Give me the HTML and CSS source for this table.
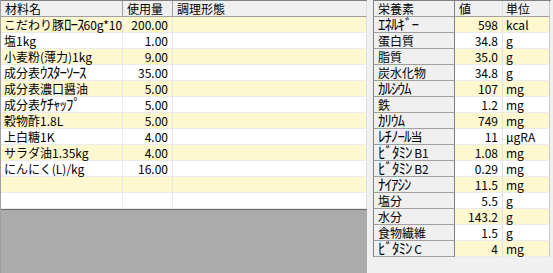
FILE: index.html
```html
<!DOCTYPE html>
<html lang="ja">
<head>
<meta charset="utf-8">
<link rel="stylesheet" href="styles.css">
</head>
<body>
<div class="app">
  <div class="left">
    <div class="lgrid">
      <div class="row head"><div class="c c1">材料名</div><div class="c c2">使用量</div><div class="c c3">調理形態</div></div>
      <div class="row y"><div class="c c1">こだわり豚<span class="hw">ﾛｰｽ</span>60g*10</div><div class="c c2 num">200.00</div><div class="c c3"></div></div>
      <div class="row"><div class="c c1">塩1kg</div><div class="c c2 num">1.00</div><div class="c c3"></div></div>
      <div class="row y"><div class="c c1">小麦粉(薄力)1kg</div><div class="c c2 num">9.00</div><div class="c c3"></div></div>
      <div class="row"><div class="c c1">成分表<span class="hw">ｳｽﾀｰｿｰｽ</span></div><div class="c c2 num">35.00</div><div class="c c3"></div></div>
      <div class="row y"><div class="c c1">成分表濃口醤油</div><div class="c c2 num">5.00</div><div class="c c3"></div></div>
      <div class="row"><div class="c c1">成分表<span class="hw">ｹﾁｬｯﾌﾟ</span></div><div class="c c2 num">5.00</div><div class="c c3"></div></div>
      <div class="row y"><div class="c c1">穀物酢1.8L</div><div class="c c2 num">5.00</div><div class="c c3"></div></div>
      <div class="row"><div class="c c1">上白糖1K</div><div class="c c2 num">4.00</div><div class="c c3"></div></div>
      <div class="row y"><div class="c c1">サラダ油1.35kg</div><div class="c c2 num">4.00</div><div class="c c3"></div></div>
      <div class="row"><div class="c c1">にんにく(L)/kg</div><div class="c c2 num">16.00</div><div class="c c3"></div></div>
      <div class="row y"><div class="c c1"></div><div class="c c2"></div><div class="c c3"></div></div>
      <div class="row"><div class="c c1"></div><div class="c c2"></div><div class="c c3"></div></div>
    </div>
    <div class="filler"></div>
  </div>
  <div class="right">
    <div class="rrow head"><div class="c n1">栄養素</div><div class="c n2">値</div><div class="c n3">単位</div></div>
    <div class="rrow y"><div class="c n1 lab"><span class="hw">ｴﾈﾙｷﾞｰ</span></div><div class="c n2 num">598</div><div class="c n3">kcal</div></div>
    <div class="rrow"><div class="c n1 lab">蛋白質</div><div class="c n2 num">34.8</div><div class="c n3">g</div></div>
    <div class="rrow y"><div class="c n1 lab">脂質</div><div class="c n2 num">35.0</div><div class="c n3">g</div></div>
    <div class="rrow"><div class="c n1 lab">炭水化物</div><div class="c n2 num">34.8</div><div class="c n3">g</div></div>
    <div class="rrow y"><div class="c n1 lab"><span class="hw">ｶﾙｼｳﾑ</span></div><div class="c n2 num">107</div><div class="c n3">mg</div></div>
    <div class="rrow"><div class="c n1 lab">鉄</div><div class="c n2 num">1.2</div><div class="c n3">mg</div></div>
    <div class="rrow y"><div class="c n1 lab"><span class="hw">ｶﾘｳﾑ</span></div><div class="c n2 num">749</div><div class="c n3">mg</div></div>
    <div class="rrow"><div class="c n1 lab"><span class="hw">ﾚﾁﾉｰﾙ</span>当</div><div class="c n2 num">11</div><div class="c n3">μgRA</div></div>
    <div class="rrow y"><div class="c n1 lab"><span class="hw">ﾋﾞﾀﾐﾝ</span> B1</div><div class="c n2 num">1.08</div><div class="c n3">mg</div></div>
    <div class="rrow"><div class="c n1 lab"><span class="hw">ﾋﾞﾀﾐﾝ</span> B2</div><div class="c n2 num">0.29</div><div class="c n3">mg</div></div>
    <div class="rrow y"><div class="c n1 lab"><span class="hw">ﾅｲｱｼﾝ</span></div><div class="c n2 num">11.5</div><div class="c n3">mg</div></div>
    <div class="rrow"><div class="c n1 lab">塩分</div><div class="c n2 num">5.5</div><div class="c n3">g</div></div>
    <div class="rrow y"><div class="c n1 lab">水分</div><div class="c n2 num">143.2</div><div class="c n3">g</div></div>
    <div class="rrow"><div class="c n1 lab">食物繊維</div><div class="c n2 num">1.5</div><div class="c n3">g</div></div>
    <div class="rrow y"><div class="c n1 lab"><span class="hw">ﾋﾞﾀﾐﾝ</span> C</div><div class="c n2 num">4</div><div class="c n3">mg</div></div>
  </div>
</div>
</body>
</html>
```
FILE: styles.css
```css
html, body {
  margin: 0;
  padding: 0;
  background: #f0f0f0;
}
body {
  font-family: "Noto Sans CJK JP", "Liberation Sans", sans-serif;
  font-size: 12px;
  color: #000;
}
.app {
  display: flex;
  width: 553px;
  height: 273px;
  gap: 6px;
  overflow: hidden;
}
.left {
  width: 367px;
  height: 273px;
  display: flex;
  flex-direction: column;
  border-top: 1px solid #808080;
  border-left: 1px solid #a0a0a0;
  box-sizing: border-box;
  background: #fff;
}
.row {
  display: grid;
  grid-template-columns: 122px 50px 1fr;
  height: 16px;
}
.c {
  box-sizing: border-box;
  height: 16px;
  line-height: 15px;
  padding: 0 3px 0 3px;
  white-space: nowrap;
  border-right: 1px solid #e8e8e8;
  border-bottom: 1px solid #ebebeb;
}
.hw {
  font-size: 15px;
  line-height: 0;
  letter-spacing: -1px;
}
.row.y .c, .rrow.y .n2, .rrow.y .n3 {
  background: #fef8d0;
}
.head .c {
  background: #f0f0f0;
  border-right: 1px solid #a0a0a0;
  border-bottom: 1px solid #a0a0a0;
  padding-left: 4px;
}
.num {
  text-align: right;
  padding-right: 4px;
}
.row .c3 {
  border-right: 1px solid #e0e0e0;
}
.filler {
  flex: 1;
  background: #ababab;
  border-top: 1px solid #696969;
}
.right {
  width: 178px;
  display: flex;
  flex-direction: column;
  border-top: 1px solid #808080;
  border-left: 1px solid #808080;
  box-sizing: border-box;
  align-self: flex-start;
}
.rrow {
  display: grid;
  grid-template-columns: 81px 48px 47px;
  height: 16px;
}
.rrow .n2, .rrow .n3 {
  background: #fff;
}
.lab, .head .n1 {
  background: #f0f0f0;
  border-right: 1px solid #808080;
  border-bottom: 1px solid #a0a0a0;
  padding-left: 4px;
}
.rrow .n2 {
  border-right: 1px solid #e0e0e0;
}
.rrow .n3 {
  padding-left: 3px;
  border-right: 1px solid #c8c8c8;
}
.rrow.head .c {
  background: #f0f0f0;
}
```
